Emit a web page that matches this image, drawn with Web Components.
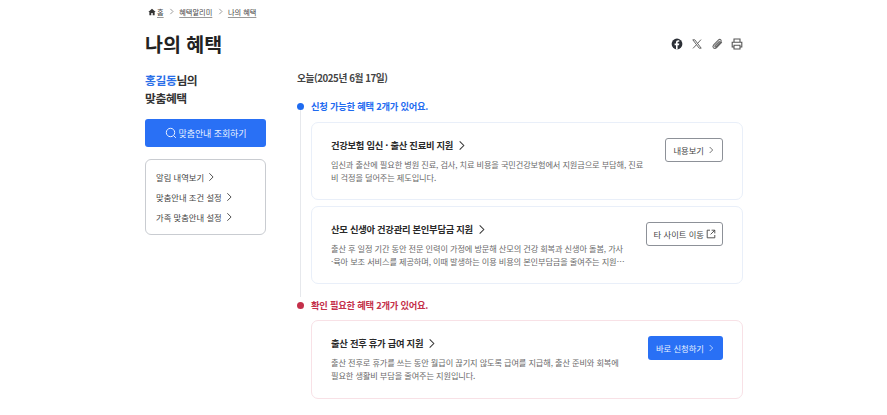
<!DOCTYPE html>
<html lang="ko"><head><meta charset="utf-8"><title>나의 혜택</title>
<style>
html,body{margin:0;padding:0;background:#fff;height:415px;overflow:hidden}
body{font-family:"Noto Sans CJK KR","Noto Sans",sans-serif;color:#1e1e1e}
</style></head><body>
<x-page>
  <x-crumbs slot="crumbs"></x-crumbs>
  <x-head slot="head">나의 혜택</x-head>
  <x-side slot="side"></x-side>
  <x-main slot="main">
    <x-section tone="blue" label="신청 가능한 혜택 2개가 있어요.">
      <x-card heading="건강보험 임신 · 출산 진료비 지원" style="--desc-w:320px">
        임신과 출산에 필요한 병원 진료, 검사, 치료 비용을 국민건강보험에서 지원금으로 부담해, 진료<br>비 걱정을 덜어주는 제도입니다.
        <x-btn slot="action" kind="outline" icon="chev">내용보기</x-btn>
      </x-card>
      <x-card heading="산모 신생아 건강관리 본인부담금 지원" style="--desc-w:296px">
        출산 후 일정 기간 동안 전문 인력이 가정에 방문해 산모의 건강 회복과 신생아 돌봄, 가사<br>·육아 보조 서비스를 제공하며, 이때 발생하는 이용 비용의 본인부담금을 줄여주는 지원금입니다. 소득 기준에 따라 차등 지원합니다.
        <x-btn slot="action" kind="outline" icon="ext">타 사이트 이동</x-btn>
      </x-card>
    </x-section>
    <x-section tone="red" label="확인 필요한 혜택 2개가 있어요." last>
      <x-card tone="red" heading="출산 전후 휴가 급여 지원" style="--desc-w:300px">
        출산 전후로 휴가를 쓰는 동안 월급이 끊기지 않도록 급여를 지급해, 출산 준비와 회복에<br>필요한 생활비 부담을 줄여주는 지원입니다.
        <x-btn slot="action" kind="solid" icon="chev">바로 신청하기</x-btn>
      </x-card>
    </x-section>
  </x-main>
</x-page>
<script>
const CHEV=(s,c='currentColor')=>`<svg width="${s}" height="${s}" viewBox="0 0 12 12" fill="none" stroke="${c}" stroke-width="1.1" style="display:block;flex:none"><path d="M4 1.5 8.5 6 4 10.5"/></svg>`;
function def(name,html,init){
  customElements.define(name,class extends HTMLElement{
    constructor(){super();this.attachShadow({mode:'open'}).innerHTML=typeof html==='function'?html(this):html;}
    connectedCallback(){init&&init(this)}
  });
}
def('x-page',`<style>
:host{display:block;width:598px;margin-left:145px}
.crumbs{height:23px}
.head{height:41px}
.cols{display:grid;grid-template-columns:121px 1fr;column-gap:31px;margin-top:7px}
</style>
<div class="crumbs"><slot name="crumbs"></slot></div>
<div class="head"><slot name="head"></slot></div>
<div class="cols"><slot name="side"></slot><slot name="main"></slot></div>`);
def('x-crumbs',`<style>
:host{display:flex;align-items:center;height:23px;font-size:7.2px;color:#444;padding-left:3px;gap:4.300px}
a{color:#444;text-decoration:underline;text-decoration-color:#999;text-underline-offset:1.5px;display:flex;align-items:center;gap:1px}
svg{display:block;flex:none}
</style>
<a><svg width="8" height="8" viewBox="0 0 10 10" fill="#333"><path d="M5 .8 .4 5h1.3v4.2h2.4V6.3h1.8v2.9h2.4V5h1.3z"/></svg>홈</a>
<span>${CHEV(7,'#666')}</span><a>혜택알리미</a><span>${CHEV(7,'#666')}</span><a>나의 혜택</a>`);
def('x-head',`<style>
:host{display:flex;justify-content:space-between;align-items:center;height:41px}
h1{margin:0;font-size:19.5px;line-height:41px;font-weight:700;color:#222}
.i{display:flex;gap:6px;align-items:center;margin-right:-1px}
.i span{width:14px;height:14px;display:block}
svg{display:block}
</style>
<h1><slot></slot></h1>
<div class="i">
<span><svg width="14" height="14" viewBox="0 0 14 14"><circle cx="7" cy="7" r="5.4" fill="#2b2f36"/><path d="M7.6 12.400V8.200h1.400l.3-1.600H7.600v-1c0-.5.2-.8.9-.8h.8V3.400C9 3.400 8.600 3.300 8.200 3.300c-1.300 0-2.200.8-2.200 2.200v1.100H4.600v1.600H6v4.200z" fill="#fff"/></svg></span>
<span><svg width="14" height="14" viewBox="0 0 14 14" fill="none" stroke="#555" stroke-width=".9"><path d="M2.800 2.800h2l6.400 8.400h-2zM11 2.600 7.700 6.300M6.300 7.900 3 11.400"/></svg></span>
<span><svg width="14" height="14" viewBox="0 0 14 14" fill="none" stroke="#666" stroke-width="1.100" stroke-linecap="round"><path d="M11.600 5.400 6.600 10.600c-1 1-2.300 1-3.100.3-.8-.8-.7-2 .2-3L8.600 2.900c.7-.7 1.600-.7 2.200-.1.600.6.500 1.500-.1 2.200L6.100 9.700c-.4.400-.8.400-1.100.1-.3-.3-.2-.7.100-1.100l4.300-4.400"/></svg></span>
<span><svg width="14" height="14" viewBox="0 0 14 14" fill="none" stroke="#555" stroke-width="1.100"><path d="M4 5V2h6v3M4 10H2.200V5.200h9.600V10H10M4 8.300h6V12H4z"/></svg></span>
</div>`);
def('x-side',`<style>
:host{display:block}
h2{margin:0;font-size:11.800px;letter-spacing:-.4px;line-height:18px;font-weight:700;color:#333;height:36px}
b{font-weight:700;color:#2a6fe8}
.go{display:flex;align-items:center;justify-content:center;gap:2px;height:28px;margin-top:12px;background:#2970f5;border-radius:3px;color:#e8f0ff;font-size:9px;letter-spacing:-.1px}
ul{list-style:none;margin:12px 0 0;padding:0 10px;box-sizing:border-box;height:76px;border:1px solid #c9ccd1;border-radius:6px;display:flex;flex-direction:column;justify-content:center}
li{display:flex;align-items:center;gap:2px;height:20px;font-size:8.300px;color:#444}
svg{display:block}
</style>
<h2><b>홍길동</b>님의<br>맞춤혜택</h2>
<div class="go"><svg width="12" height="12" viewBox="0 0 12 12" fill="none" stroke="#e8f0ff" stroke-width="1"><circle cx="5.500" cy="5.500" r="4.200"/><path d="m8.600 8.600 2.300 2.300"/></svg>맞춤안내 조회하기</div>
<ul><li>알림 내역보기 ${CHEV(10,'#444')}</li><li>맞춤안내 조건 설정 ${CHEV(10,'#444')}</li><li>가족 맞춤안내 설정 ${CHEV(10,'#444')}</li></ul>`);
def('x-main',`<style>
:host{display:block}
.d{font-size:9.700px;letter-spacing:-.42px;line-height:14px;font-weight:700;color:#444;height:27px}
</style>
<div class="d">오늘(2025년 6월 17일)</div>
<slot></slot>`);
def('x-section',el=>{
  const red=el.getAttribute('tone')==='red';const c=red?'#c4304a':'#1f6bf0';
  return `<style>
:host{display:block;position:relative;padding-left:14px}
.dot{position:absolute;left:0;top:5px;width:7px;height:7px;border-radius:50%;background:${c}}
.line{position:absolute;left:3px;top:8px;bottom:-13px;width:1px;background:#e6e8ec;${el.hasAttribute('last')?'display:none':''}}
.l{font-size:9.300px;letter-spacing:-.25px;line-height:16px;font-weight:700;color:${c};height:16px}
.c{display:flex;flex-direction:column;gap:6px;margin-top:${red?7:8}px}
</style><div class="line"></div><div class="dot"></div><div class="l">${el.getAttribute('label')}</div><div class="c"><slot></slot></div>`;
},el=>{el.style.marginTop=el.hasAttribute('last')?'13px':'0'});
def('x-card',el=>{
  const red=el.getAttribute('tone')==='red';
  return `<style>
:host{display:flex;justify-content:space-between;box-sizing:border-box;height:${red?79:78}px;border:1px solid ${red?'#f8e1e6':'#e9eff9'};border-radius:7px;padding:14px 19px 0 19px;background:#fff}
.t{display:flex;align-items:center;gap:3px;font-size:9.300px;letter-spacing:-.27px;line-height:16px;font-weight:700;color:#2a2a2a;white-space:nowrap}
.d{margin-top:5px;width:var(--desc-w);font-size:8.200px;letter-spacing:-.12px;line-height:13px;color:#6a6a6a;display:-webkit-box;-webkit-line-clamp:2;-webkit-box-orient:vertical;overflow:hidden;word-break:break-all}
.a{flex:none;display:flex;align-items:flex-start;padding-top:1px}
</style><div><div class="t">${el.getAttribute('heading')}${CHEV(11,'#333')}</div><div class="d"><slot></slot></div></div><div class="a"><slot name="action"></slot></div>`;
});
def('x-btn',el=>{
  const solid=el.getAttribute('kind')==='solid';
  const ext=el.getAttribute('icon')==='ext';
  const ic=ext
   ?`<svg width="10" height="10" viewBox="0 0 10 10" fill="none" stroke="#444" stroke-width=".9" style="display:block"><path d="M4 1.200H1.200v7.600h7.600V6M5.600 1.200h3.200v3.200M8.800 1.200 4.600 5.400"/></svg>`
   :CHEV(8,solid?'#e8f0ff':'#444');
  return `<style>
:host{display:inline-flex;align-items:center;gap:${ext?2:3}px;box-sizing:border-box;height:24px;padding:0 ${solid?8:7}px;${ext?'padding-right:6px;':''}border-radius:3px;font-size:8.300px;white-space:nowrap;
${solid?'background:#2970f5;color:#e8f0ff;':'background:#fff;color:#444;border:1px solid #8d9198;'}}
</style><slot></slot>${ic}`;
});
</script>
</body></html>
